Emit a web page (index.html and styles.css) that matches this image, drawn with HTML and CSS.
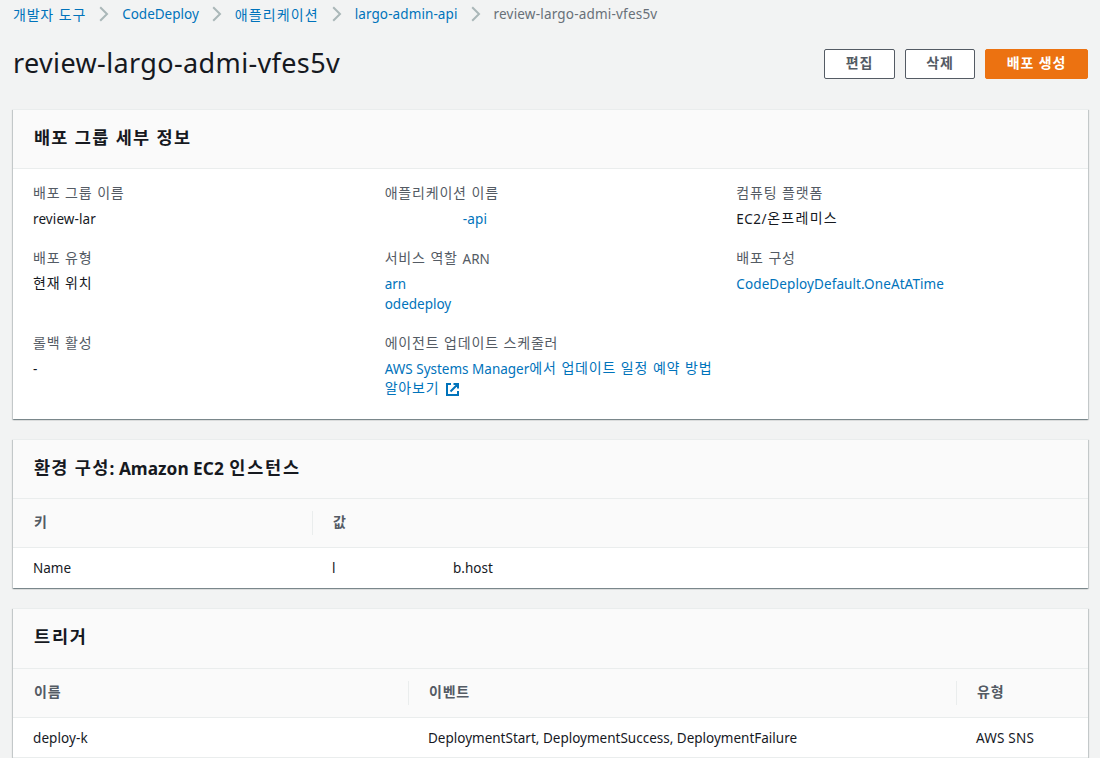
FILE: index.html
```html
<!DOCTYPE html>
<html lang="ko">
<head>
<meta charset="utf-8">
<title>review-largo-admi-vfes5v</title>
<link rel="stylesheet" href="styles.css">
</head>
<body>
<nav class="crumbs">
  <a class="ko">개발자 도구</a>
  <svg class="chev" viewBox="0 0 10 16"><path d="M1.2 1.2 8 8l-6.8 6.8"/></svg>
  <a>CodeDeploy</a>
  <svg class="chev" viewBox="0 0 10 16"><path d="M1.2 1.2 8 8l-6.8 6.8"/></svg>
  <a class="ko app">애플리케이션</a>
  <svg class="chev" viewBox="0 0 10 16"><path d="M1.2 1.2 8 8l-6.8 6.8"/></svg>
  <a class="wide">largo-admin-api</a>
  <svg class="chev" viewBox="0 0 10 16"><path d="M1.2 1.2 8 8l-6.8 6.8"/></svg>
  <span class="current">review-largo-admi-vfes5v</span>
</nav>
<header class="page-head">
  <h1>review-largo-admi-vfes5v</h1>
  <div class="actions">
    <button class="btn ko edit">편집</button>
    <button class="btn ko">삭제</button>
    <button class="btn ko primary">배포 생성</button>
  </div>
</header>
<main>
  <section class="card">
    <h2><span class="ko">배포 그룹 세부 정보</span></h2>
    <div class="details">
      <div><div class="label"><span class="ko">배포 그룹 이름</span></div><div class="value wide">review-lar</div></div>
      <div><div class="label"><span class="ko">애플리케이션 이름</span></div><div class="value link indent">-api</div></div>
      <div><div class="label"><span class="ko">컴퓨팅 플랫폼</span></div><div class="value platform">EC2/<span class="ko">온프레미스</span></div></div>
      <div><div class="label"><span class="ko">배포 유형</span></div><div class="value"><span class="ko">현재 위치</span></div></div>
      <div><div class="label"><span class="ko">서비스 역할 </span>ARN</div><div class="value link">arn<br>odedeploy</div></div>
      <div><div class="label"><span class="ko">배포 구성</span></div><div class="value link wide">CodeDeployDefault.OneAtATime</div></div>
      <div><div class="label"><span class="ko">롤백 활성</span></div><div class="value">-</div></div>
      <div><div class="label"><span class="ko">에이전트 업데이트 스케줄러</span></div><div class="value link">AWS Systems Manager<span class="ko">에서 업데이트 일정 예약 방법<br>알아보기</span><svg class="ext" viewBox="0 0 13 13"><path d="M5 1H1v11h11V8M7.500 1H12v4.500M12 1 4.500 8.500"/></svg></div></div>
    </div>
  </section>
  <section class="card">
    <h2><span class="ko">환경 구성</span>: Amazon EC2 <span class="ko last">인스턴스</span></h2>
    <div class="row head env"><div><span class="ko">키</span></div><div><span class="ko">값</span></div></div>
    <div class="row env"><div>Name</div><div class="host"><span>l</span><span>b.host</span></div></div>
  </section>
  <section class="card triggers">
    <h2><span class="ko last">트리거</span></h2>
    <div class="row head trig"><div><span class="ko">이름</span></div><div><span class="ko">이벤트</span></div><div><span class="ko">유형</span></div></div>
    <div class="row trig"><div class="wide">deploy-k</div><div>DeploymentStart, DeploymentSuccess, DeploymentFailure</div><div class="current">AWS SNS</div></div>
  </section>
</main>
</body>
</html>
```
FILE: styles.css
```css
* { box-sizing: border-box; }
body {
  margin: 0;
  height: 758px;
  overflow: hidden;
  background: #f2f3f3;
  color: #16191f;
  font: 13.5px/20px "Noto Sans", "Noto Sans CJK KR", sans-serif;
}
.ko {
  font-family: "Noto Sans CJK KR", sans-serif;
  font-size: 14px;
  letter-spacing: .8px;
}
.wide { letter-spacing: .1px; }
.crumbs {
  display: flex;
  align-items: center;
  height: 28px;
  padding-left: 13px;
  white-space: nowrap;
  color: #687078;
}
.crumbs a, .link { color: #0073bb; }
.crumbs .ko { padding-bottom: 1px; }
.crumbs .app { letter-spacing: 1.1px; }
.current { letter-spacing: .2px; }
.chev { width: 10px; height: 16px; margin: 0 13px; fill: none; stroke: #aab7b8; stroke-width: 2; }
.page-head {
  display: flex;
  justify-content: space-between;
  align-items: center;
  height: 72px;
  padding: 0 12px 0 13px;
}
h1 { margin: 0 0 2px; font-size: 27px; line-height: 36px; font-weight: 400; letter-spacing: .37px; }
.actions { display: flex; gap: 10px; }
.btn {
  width: 70px;
  height: 30px;
  padding: 0 0 4px;
  border: 1px solid #545b64;
  border-radius: 2px;
  background: #fff;
  color: #545b64;
  font-weight: 700;
}
.btn.edit { width: 71px; }
.btn.primary { width: 103px; border-color: #ec7211; background: #ec7211; color: #fff; }
main { display: flex; flex-direction: column; gap: 20px; padding: 9px 12px 0 13px; }
.card {
  border-top: 1px solid #eaeded;
  background: #fff;
  box-shadow: 0 1px 1px 0 rgba(0,28,36,.3), 1px 1px 1px 0 rgba(0,28,36,.15), -1px 1px 1px 0 rgba(0,28,36,.15);
}
h2 {
  margin: 0;
  height: 59px;
  padding: 17px 20px 0;
  border-bottom: 1px solid #eaeded;
  background: #fafafa;
  font-size: 17.3px;
  line-height: 24px;
  font-weight: 700;
}
h2 .ko { font-size: 17.5px; letter-spacing: 1.25px; }
h2 .last { letter-spacing: 1.8px; }
h2 .ko + .last { margin-left: 1px; }
h2 .ko, .label .ko, .value .ko, .row .ko { line-height: 1; vertical-align: 1px; }
h2 .ko:first-child, .row .ko { padding-left: 1px; }
.details {
  display: grid;
  grid-template-columns: repeat(3, 1fr);
  row-gap: 19px;
  padding: 14px 0 20px 20px;
}
.label { height: 20px; margin-bottom: 6px; padding-top: 1px; color: #545b64; white-space: nowrap; }
.value { white-space: nowrap; }
.platform { letter-spacing: .5px; }
.platform .ko { letter-spacing: 1.3px; }
.indent { padding-left: 78px; letter-spacing: .2px; }
.ext { width: 13px; height: 13px; margin-left: 7px; vertical-align: -2px; fill: none; stroke: currentColor; stroke-width: 2; }
.row { display: grid; height: 40px; align-items: center; white-space: nowrap; }
.row > div { padding-left: 20px; }
.row.env { grid-template-columns: 299px 1fr; }
.row.trig { grid-template-columns: 395px 548px 1fr; }
.row.head {
  height: 49px;
  border-bottom: 1px solid #eaeded;
  background: #fafafa;
  color: #545b64;
  font-weight: 700;
}
.row.head > div { height: 24px; line-height: 24px; }
.row.head > div + div { border-left: 1px solid #eaeded; }
.row.head > div + div .ko { padding-left: 0; }
.host { display: grid; grid-template-columns: 121px 1fr; }
.triggers h2 { height: 60px; }
.triggers .row:last-child { border-bottom: 1px solid #eaeded; }
```
